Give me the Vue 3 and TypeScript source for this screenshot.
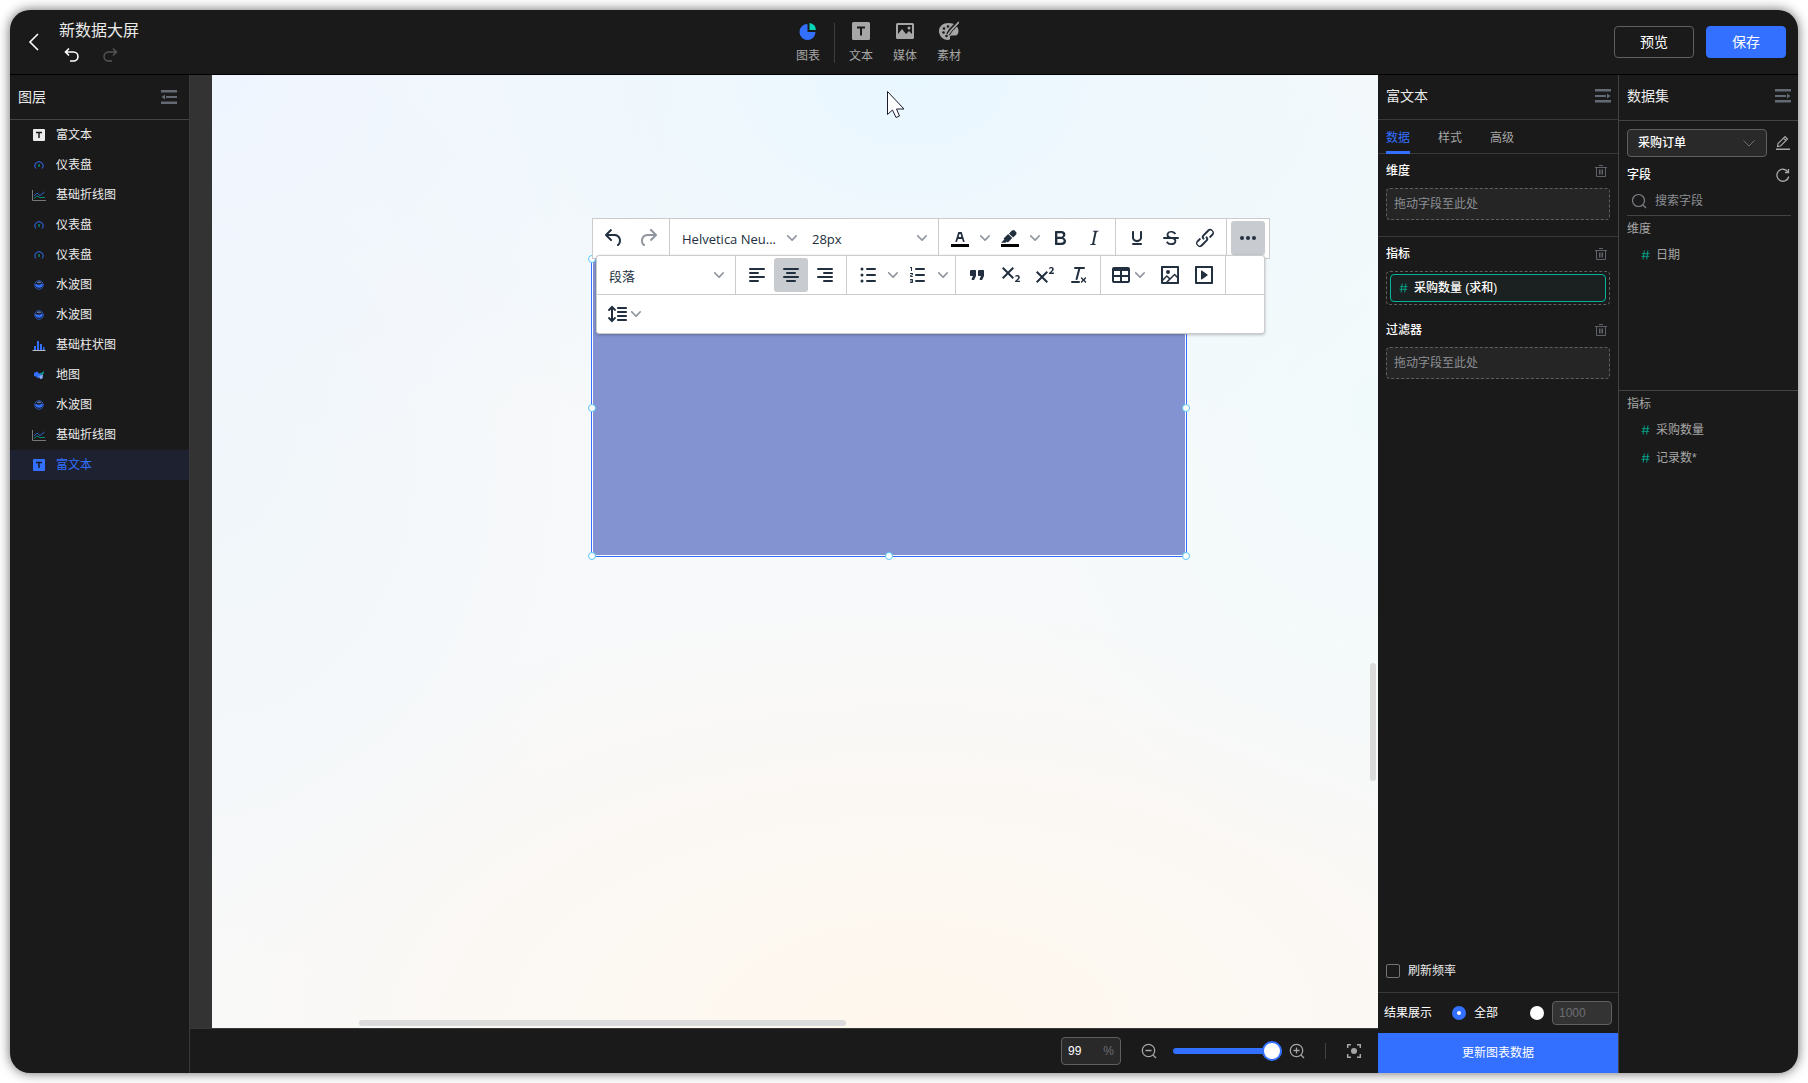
<script setup lang="ts">
import { ref } from 'vue'

type LayerKind = 'text' | 'gauge' | 'line' | 'liquid' | 'bar' | 'map'

interface Layer {
  kind: LayerKind
  name: string
}

interface ToolButton {
  id: string
  label: string
  paths: string[]
  split?: boolean
  menu?: boolean
  active?: boolean
  muted?: boolean
}

const layers: Layer[] = [
  { kind: 'text', name: '富文本' },
  { kind: 'gauge', name: '仪表盘' },
  { kind: 'line', name: '基础折线图' },
  { kind: 'gauge', name: '仪表盘' },
  { kind: 'gauge', name: '仪表盘' },
  { kind: 'liquid', name: '水波图' },
  { kind: 'liquid', name: '水波图' },
  { kind: 'bar', name: '基础柱状图' },
  { kind: 'map', name: '地图' },
  { kind: 'liquid', name: '水波图' },
  { kind: 'line', name: '基础折线图' },
  { kind: 'text', name: '富文本' },
]
const selectedLayer = ref(11)

const tabs = ['数据', '样式', '高级']
const activeTab = ref(0)

const chevron =
  'M8.7 2.2c.3-.3.8-.3 1 0 .4.4.4.9 0 1.2L5.7 7.8c-.3.3-.9.3-1.2 0L.2 3.4a.8.8 0 010-1.2c.3-.3.8-.3 1.1 0L5 6l3.7-3.8z'

const history: ToolButton[] = [
  {
    id: 'undo',
    label: '撤销',
    paths: [
      'M6.4 8H12c3.7 0 6.2 2 6.8 5.1.6 2.7-.4 5.6-2.3 6.8a1 1 0 01-1-1.8c1.1-.6 1.8-2.7 1.4-4.6-.5-2.1-2.1-3.5-4.9-3.5H6.4l3.3 3.3a1 1 0 11-1.4 1.4l-5-5a1 1 0 010-1.4l5-5a1 1 0 011.4 1.4L6.4 8z',
    ],
  },
  {
    id: 'redo',
    label: '重做',
    muted: true,
    paths: [
      'M17.6 10H12c-2.8 0-4.4 1.4-4.9 3.5-.4 2 .3 4 1.4 4.6a1 1 0 11-1 1.8c-2-1.2-2.9-4.1-2.3-6.8.6-3 3-5.1 6.8-5.1h5.6l-3.3-3.3a1 1 0 111.4-1.4l5 5a1 1 0 010 1.4l-5 5a1 1 0 01-1.4-1.4l3.3-3.3z',
    ],
  },
]

const colorTools: ToolButton[] = [
  {
    id: 'forecolor',
    label: '文字颜色',
    split: true,
    paths: [
      'M3 18h18v3H3z',
      'M8.7 16h-.8a.5.5 0 01-.5-.6l2.7-9c.1-.3.3-.4.5-.4h2.8c.2 0 .4.1.5.4l2.7 9a.5.5 0 01-.5.6h-.8a.5.5 0 01-.4-.4l-.7-2.2c0-.3-.3-.4-.5-.4h-3.4c-.2 0-.4.1-.5.4l-.7 2.2c0 .3-.2.4-.4.4zm2.6-7.6l-.6 2a.5.5 0 00.5.6h1.6a.5.5 0 00.5-.6l-.6-2c0-.3-.3-.4-.5-.4h-.4c-.2 0-.4.1-.5.4z',
    ],
  },
  {
    id: 'backcolor',
    label: '背景颜色',
    split: true,
    paths: [
      'M3 18h18v3H3z',
      'M7.7 16.7H3l3.3-3.3-.7-.8L10.2 8l4 4.1-4 4.2c-.2.2-.6.2-.8 0l-.6-.7-1.1 1.1zm5-7.5L11 7.4l3-2.9a2 2 0 012.6 0L18 6c.7.7.7 2 0 2.7l-2.9 2.9-1.8-1.8-.5-.6z',
    ],
  },
  {
    id: 'bold',
    label: '粗体',
    paths: [
      'M7.8 19c-.3 0-.5 0-.6-.2l-.2-.5V5.7c0-.2 0-.4.2-.5l.6-.2h5c1.5 0 2.7.3 3.5 1 .7.6 1.1 1.4 1.1 2.5a3 3 0 01-.6 1.9c-.4.6-1 1-1.6 1.2.4.1.9.3 1.3.6s.8.7 1 1.2c.4.4.5 1 .5 1.6 0 1.3-.4 2.3-1.3 3-.8.7-2.1 1-3.8 1H7.8zm5-8.3c.6 0 1.2-.1 1.6-.5.4-.3.6-.7.6-1.3 0-1.1-.8-1.7-2.3-1.7H9.3v3.5h3.4zm.5 6c.7 0 1.3-.1 1.7-.4.4-.4.6-.9.6-1.5s-.2-1-.7-1.4c-.4-.3-1-.4-2-.4H9.4v3.8h4z',
    ],
  },
  {
    id: 'italic',
    label: '斜体',
    paths: [
      'M16.7 4.7l-.1.9h-.3c-.6 0-1 0-1.4.3-.3.3-.4.6-.5 1.1l-2.1 9.8v.6c0 .5.4.8 1.4.8h.2l-.2.8H8l.2-.8h.2c1.1 0 1.8-.5 2-1.5l2-9.8.1-.5c0-.6-.4-.8-1.4-.8h-.3l.2-.9h5.8z',
    ],
  },
]

const decorTools: ToolButton[] = [
  {
    id: 'underline',
    label: '下划线',
    paths: [
      'M16 5c.6 0 1 .4 1 1v5.5a4 4 0 01-.4 1.8l-1 1.4a5.3 5.3 0 01-5.5 1 5 5 0 01-1.6-1c-.5-.4-.8-.9-1.1-1.4a4 4 0 01-.4-1.8V6c0-.6.4-1 1-1s1 .4 1 1v5.5c0 .3 0 .6.2 1l.6.7a3.3 3.3 0 002.2.8 3.4 3.4 0 002.2-.8c.3-.2.4-.5.6-.8l.2-.9V6c0-.6.4-1 1-1zM8 17h8c.6 0 1 .4 1 1s-.4 1-1 1H8a1 1 0 010-2z',
    ],
  },
  {
    id: 'strike',
    label: '删除线',
    paths: [
      'M15.6 8.5c-.5-.7-1-1.1-1.3-1.3-.6-.4-1.3-.6-2-.6-2.7 0-2.8 1.7-2.8 2.1 0 1.6 1.8 2 3.2 2.3 4.4.9 4.6 2.8 4.6 3.9 0 1.4-.7 4.1-5 4.1A6.2 6.2 0 017 16.4l1.5-1.1c.4.6 1.6 2 3.7 2 1.6 0 2.5-.4 3-1.2.4-.8.3-2-.8-2.6-.7-.4-1.6-.7-2.9-1-1-.2-3.9-.8-3.9-3.6C7.6 6 10.3 5 12.4 5c2.9 0 4.2 1.6 4.7 2.4l-1.5 1.1z',
      'M5 11h14a1 1 0 010 2H5a1 1 0 010-2z',
    ],
  },
  {
    id: 'link',
    label: '链接',
    paths: [
      'M6.2 12.3a1 1 0 011.4 1.4l-2.1 2a2 2 0 102.7 2.8l4.8-4.8a1 1 0 000-1.4 1 1 0 111.4-1.3 2.9 2.9 0 010 4L9.6 20a3.9 3.9 0 01-5.5-5.5l2-2zm11.6-.6a1 1 0 01-1.4-1.4l2-2a2 2 0 10-2.6-2.8L11 10.3a1 1 0 000 1.4A1 1 0 119.6 13a2.9 2.9 0 010-4L14.4 4a3.9 3.9 0 015.5 5.5l-2 2z',
    ],
  },
]

const moreTools: ToolButton[] = [
  {
    id: 'more',
    label: '更多',
    active: true,
    paths: [
      'M6 10a2 2 0 100 4 2 2 0 000-4zm12 0a2 2 0 100 4 2 2 0 000-4zm-6 0a2 2 0 100 4 2 2 0 000-4z',
    ],
  },
]

const alignTools: ToolButton[] = [
  {
    id: 'left',
    label: '左对齐',
    paths: [
      'M5 5h14a1 1 0 010 2H5a1 1 0 110-2zm0 4h8a1 1 0 010 2H5a1 1 0 110-2zm0 8h8a1 1 0 010 2H5a1 1 0 010-2zm0-4h14a1 1 0 010 2H5a1 1 0 010-2z',
    ],
  },
  {
    id: 'center',
    label: '居中',
    active: true,
    paths: [
      'M5 5h14a1 1 0 010 2H5a1 1 0 110-2zm3 4h8a1 1 0 010 2H8a1 1 0 110-2zm0 8h8a1 1 0 010 2H8a1 1 0 010-2zm-3-4h14a1 1 0 010 2H5a1 1 0 010-2z',
    ],
  },
  {
    id: 'right',
    label: '右对齐',
    paths: [
      'M5 5h14a1 1 0 010 2H5a1 1 0 110-2zm6 4h8a1 1 0 010 2h-8a1 1 0 010-2zm0 8h8a1 1 0 010 2h-8a1 1 0 010-2zm-6-4h14a1 1 0 010 2H5a1 1 0 010-2z',
    ],
  },
]

const listTools: ToolButton[] = [
  {
    id: 'bullets',
    label: '项目符号',
    split: true,
    paths: [
      'M11 5h8a1 1 0 010 2h-8a1 1 0 010-2zm0 6h8a1 1 0 010 2h-8a1 1 0 010-2zm0 6h8a1 1 0 010 2h-8a1 1 0 010-2z',
      'M6 4.5a1.5 1.5 0 110 3 1.5 1.5 0 010-3zm0 6a1.5 1.5 0 110 3 1.5 1.5 0 010-3zm0 6a1.5 1.5 0 110 3 1.5 1.5 0 010-3z',
    ],
  },
  {
    id: 'numbers',
    label: '编号列表',
    split: true,
    paths: [
      'M10 17h8a1 1 0 010 2h-8a1 1 0 010-2zm0-6h8a1 1 0 010 2h-8a1 1 0 010-2zm0-6h8a1 1 0 010 2h-8a1 1 0 110-2z',
      'M6 4v3.5c0 .3-.2.5-.5.5a.5.5 0 01-.5-.5V5h-.5a.5.5 0 010-1H6zm-1 8.8l.2.2h1.3c.3 0 .5.2.5.5s-.2.5-.5.5H4.9a1 1 0 01-.9-1V13c0-.4.3-.8.6-1l1.2-.4.2-.3a.2.2 0 00-.2-.2H4.5a.5.5 0 01-.5-.5c0-.3.2-.5.5-.5h1.6c.5 0 .9.4.9 1v.1c0 .4-.3.8-.6 1l-1.2.4-.2.3zM7 17v2c0 .6-.4 1-1 1H4.5a.5.5 0 010-1h1.2c.2 0 .3-.1.3-.3 0-.2-.1-.3-.3-.3H4.4a.4.4 0 110-.8h1.3c.2 0 .3-.1.3-.3 0-.2-.1-.3-.3-.3H4.5a.5.5 0 110-1H6c.6 0 1 .4 1 1z',
    ],
  },
]

const formatTools: ToolButton[] = [
  {
    id: 'quote',
    label: '引用',
    paths: [
      'M7.5 17h.9c.4 0 .7-.2.9-.6L11 13V8c0-.6-.4-1-1-1H6a1 1 0 00-1 1v4c0 .6.4 1 1 1h2l-1.3 2.7a1 1 0 00.8 1.3zm8 0h.9c.4 0 .7-.2.9-.6L19 13V8c0-.6-.4-1-1-1h-4a1 1 0 00-1 1v4c0 .6.4 1 1 1h2l-1.3 2.7a1 1 0 00.8 1.3z',
    ],
  },
  {
    id: 'sub',
    label: '下标',
    paths: [
      'M10.4 10l4.6 4.6-1.4 1.4L9 11.4 4.4 16 3 14.6 7.6 10 3 5.4 4.4 4 9 8.6 13.6 4 15 5.4 10.4 10zM21 19h-5v-1l1-.8 1.7-1.6c.3-.4.5-.8.5-1.2 0-.3 0-.6-.2-.7-.2-.2-.5-.3-.9-.3a2 2 0 00-.8.2l-.7.3-.4-1.1 1-.6 1.2-.2c.8 0 1.4.3 1.8.7.4.4.6.9.6 1.5s-.2 1.1-.5 1.6a8 8 0 01-1.3 1.3l-.6.6h2.6V19z',
    ],
  },
  {
    id: 'sup',
    label: '上标',
    paths: [
      'M15 9.4L10.4 14l4.6 4.6-1.4 1.4L9 15.4 4.4 20 3 18.6 7.6 14 3 9.4 4.4 8 9 12.6 13.6 8 15 9.4zm5.9 1.6h-5v-1l1-.8 1.7-1.6c.3-.5.5-.9.5-1.3 0-.3 0-.5-.2-.7-.2-.2-.5-.3-.9-.3l-.8.2-.7.4-.4-1.2c.2-.2.5-.4 1-.5.3-.2.8-.2 1.2-.2.8 0 1.4.2 1.8.6.4.4.6 1 .6 1.6 0 .5-.2 1-.5 1.5l-1.3 1.4-.6.5h2.6V11z',
    ],
  },
  {
    id: 'clear',
    label: '清除格式',
    paths: [
      'M13.2 6a1 1 0 010 .2l-2.6 10a1 1 0 01-1 .8h-.2a.8.8 0 01-.8-1l2.6-10H8a1 1 0 110-2h9a1 1 0 010 2h-3.8zM5 18h7a1 1 0 010 2H5a1 1 0 010-2zm13 1.5L16.5 18 15 19.5a.7.7 0 01-1-1l1.5-1.5-1.5-1.5a.7.7 0 011-1l1.5 1.5 1.5-1.5a.7.7 0 011 1L17.5 17l1.5 1.5a.7.7 0 01-1 1z',
    ],
  },
]

const insertTools: ToolButton[] = [
  {
    id: 'table',
    label: '表格',
    menu: true,
    paths: [
      'M19 4a2 2 0 012 2v12a2 2 0 01-2 2H5a2 2 0 01-2-2V6c0-1.1.9-2 2-2h14zM5 14v4h6v-4H5zm14 0h-6v4h6v-4zm0-6h-6v4h6V8zM5 12h6V8H5v4z',
    ],
  },
  {
    id: 'image',
    label: '图片',
    paths: [
      'M5 15.7l3.3-3.2c.3-.3.7-.3 1 0L12 15l4.1-4c.3-.4.8-.4 1 0l2 1.9V5H5v10.7zM5 18V19h3l2.8-2.9-2-2L5 17.9zm14-3l-2.5-2.4-6.4 6.5H19v-4zM4 3h16c.6 0 1 .4 1 1v16c0 .6-.4 1-1 1H4a1 1 0 01-1-1V4c0-.6.4-1 1-1zm6 8a2 2 0 100-4 2 2 0 000 4z',
    ],
  },
  {
    id: 'media',
    label: '媒体',
    paths: [
      'M4 3h16c.6 0 1 .4 1 1v16c0 .6-.4 1-1 1H4a1 1 0 01-1-1V4c0-.6.4-1 1-1zm1 2v14h14V5H5zm4.8 2.6l5.6 4a.5.5 0 010 .8l-5.6 4A.5.5 0 019 16V8a.5.5 0 01.8-.4z',
    ],
  },
]

const spacingTools: ToolButton[] = [
  {
    id: 'lineheight',
    label: '行高',
    menu: true,
    paths: [
      'M21 5a1 1 0 01.1 2H13a1 1 0 01-.1-2H21zm0 4a1 1 0 01.1 2H13a1 1 0 01-.1-2H21zm0 4a1 1 0 01.1 2H13a1 1 0 01-.1-2H21zm0 4a1 1 0 01.1 2H13a1 1 0 01-.1-2H21z',
      'M7 3.6l3.7 3.7a1 1 0 01-1.3 1.5h-.1L8 7.3v9.2l1.3-1.3a1 1 0 011.3 0h.1c.4.4.4 1 0 1.3v.1L7 20.4l-3.7-3.7a1 1 0 011.3-1.5h.1L6 16.7V7.4L4.7 8.7a1 1 0 01-1.3 0h-.1a1 1 0 010-1.3v-.1L7 3.6z',
    ],
  },
]

type Group = { kind: 'tools'; items: ToolButton[] } | { kind: 'picks'; items: string[] } | { kind: 'empty' }

const mainBar: Group[] = [
  { kind: 'tools', items: history },
  { kind: 'picks', items: ['Helvetica Neu...', '28px'] },
  { kind: 'tools', items: colorTools },
  { kind: 'tools', items: decorTools },
  { kind: 'tools', items: moreTools },
]
const overflowRows: Group[][] = [
  [
    { kind: 'picks', items: ['段落'] },
    { kind: 'tools', items: alignTools },
    { kind: 'tools', items: listTools },
    { kind: 'tools', items: formatTools },
    { kind: 'tools', items: insertTools },
    { kind: 'empty' },
  ],
  [{ kind: 'tools', items: spacingTools }],
]

const bars = [
  { rows: [mainBar], name: 'main-bar' },
  { rows: overflowRows, name: 'overflow-bar' },
]
const handles = ['nw', 'w', 'e', 'sw', 's', 'se']

const zoom = ref('99')
const zoomLevel = ref(100)
const refreshRate = ref(false)
const resultMode = ref('all')
const keyword = ref('')
const measures = ['采购数量', '记录数*']
</script>

<template>
  <div class="frame">
    <div class="app">
      <header class="topbar">
        <div class="top-left">
          <button class="icon-btn" aria-label="返回">
            <svg width="20" height="20" viewBox="0 0 20 20" fill="none" stroke="#fff" stroke-width="1.6"><path d="M14 2L6 10l8 8" /></svg>
          </button>
          <div class="title-box">
            <h1>新数据大屏</h1>
            <div class="history">
              <button class="icon-btn" aria-label="撤销">
                <svg width="16" height="16" viewBox="0 0 16 16" fill="none" stroke="#fff" stroke-width="1.6"><path d="M5 1.5L1.5 5 5 8.5M2 5h7.5a4.5 4.5 0 010 9H6" /></svg>
              </button>
              <button class="icon-btn" aria-label="重做">
                <svg width="16" height="16" viewBox="0 0 16 16" fill="none" stroke="#565656" stroke-width="1.4"><path d="M11 1.5L14.5 5 11 8.5M14 5H6.5a4.5 4.5 0 000 9H10" /></svg>
              </button>
            </div>
          </div>
        </div>

        <nav class="inserts">
          <button class="insert">
            <svg width="20" height="20" viewBox="0 0 20 20"><path d="M9.500 3a8 8 0 108 8h-8z" fill="#3370ff" /><path d="M11.500 2a7 7 0 016.500 7h-6.500z" fill="#04d7b6" /></svg>
            <span>图表</span>
          </button>
          <i class="insert-line"></i>
          <button class="insert">
            <svg width="20" height="20" viewBox="0 0 20 20"><rect x="1" y="1" width="18" height="18" rx="1.500" fill="#a6a6a6" /><path d="M6 6.500h8M10 6.500v8" stroke="#1a1a1a" stroke-width="2" /></svg>
            <span>文本</span>
          </button>
          <button class="insert">
            <svg width="20" height="20" viewBox="0 0 20 20"><rect x="1" y="2" width="18" height="16" rx="1.500" fill="#a6a6a6" /><path d="M3 4h14v9l-3-3-3 3-4-5-4 5z" fill="#1a1a1a" /><circle cx="14" cy="7" r="1.500" fill="#a6a6a6" /></svg>
            <span>媒体</span>
          </button>
          <button class="insert">
            <svg width="20" height="20" viewBox="0 0 20 20">
              <path d="M9.500 2C4 2 0 5.500 0 10s3.500 9 9 9c1.600 0 2.200-1 2-2.300-.2-1.500.3-2.200 2-2.200h3c2.500 0 3.500-2 3.500-4.500C19.500 5 15.500 2 9.500 2z" fill="#a6a6a6" />
              <g fill="#1a1a1a"><circle cx="4.500" cy="11.500" r="1.300" /><circle cx="5" cy="7.500" r="1.300" /><circle cx="9" cy="5.500" r="1.300" /><circle cx="7.500" cy="15" r="1.300" /></g>
              <path d="M20 .5L11.500 9.500 9 13.500" fill="none" stroke="#1a1a1a" stroke-width="4" />
              <path d="M19.500 1.500L12 9.500l-2.500 3.500" fill="none" stroke="#a6a6a6" stroke-width="1.800" stroke-linecap="round" />
            </svg>
            <span>素材</span>
          </button>
        </nav>

        <div class="actions">
          <button class="btn">预览</button>
          <button class="btn primary">保存</button>
        </div>
      </header>

      <div class="body">
        <aside class="layers">
          <div class="panel-head">
            <h2>图层</h2>
            <button class="icon-btn" aria-label="收起图层">
              <svg width="16" height="14" viewBox="0 0 16 14" fill="#646a73"><path d="M0 0h16v2.500H0zM5 6h11v2H5zM0 11.500h16V14H0zM.5 7l3.500-2.500v5z" /></svg>
            </button>
          </div>
          <ul>
            <li v-for="(layer, i) in layers" :key="i">
              <button class="layer" :class="{ selected: i === selectedLayer }" @click="selectedLayer = i">
                <svg width="14" height="14" viewBox="0 0 14 14">
                  <template v-if="layer.kind === 'text'">
                    <rect x="1" y="1" width="12" height="12" rx="1" :fill="i === selectedLayer ? '#3370ff' : '#ebebeb'" />
                    <path d="M4 4.500h6M7 4.500V10" stroke="#1a1a1a" stroke-width="1.500" />
                  </template>
                  <template v-else-if="layer.kind === 'gauge'">
                    <path d="M4 10.500a4 4 0 116 0" fill="none" stroke="#2f5fd0" stroke-width="1.100" />
                    <path d="M7 6v3" stroke="#04866f" stroke-width="1.500" />
                  </template>
                  <template v-else-if="layer.kind === 'line'">
                    <path d="M.5 2v10.500H14" fill="none" stroke="#77797c" />
                    <path d="M2 8l3-3 3 2.500L12.500 4" fill="none" stroke="#3370ff" stroke-opacity=".8" />
                    <path d="M2 10.500l3-2.500 3 1.500h5" fill="none" stroke="#04a68d" stroke-opacity=".8" />
                  </template>
                  <template v-else-if="layer.kind === 'liquid'">
                    <circle cx="7" cy="7" r="4.300" fill="none" stroke="#2c56b8" />
                    <path d="M3.200 6c1.500-.5 2.500 1 4 .8S9.700 5.500 10.800 6a3.800 3.800 0 11-7.600 0z" fill="#3370ff" />
                    <path d="M4.500 4.500a4 4 0 015 0c-1.500.8-3 1-5 0z" fill="#9db8ff" fill-opacity=".6" />
                  </template>
                  <template v-else-if="layer.kind === 'bar'">
                    <path d="M2 8h2v4H2zM5 3h2v9H5zM8 6h2v6H8zM11 9h1.500v3H11z" fill="#3370ff" />
                    <path d="M.5 12.500h13" stroke="#b8bbc0" />
                  </template>
                  <template v-else>
                    <path d="M2 5l3-1.500 2 2L9.500 5l-1 3.500L6 10.500 4 8.500 2 8z" fill="#3370ff" />
                    <path d="M8 6l4-3-.5 3-2 1z" fill="#04a68d" />
                    <path d="M7 8l4-1.500-.5 4-2.500.5z" fill="#8cacff" />
                  </template>
                </svg>
                <span>{{ layer.name }}</span>
              </button>
            </li>
          </ul>
        </aside>

        <main class="workspace">
          <div class="stage">
            <div class="canvas">
              <div class="selection">
                <i v-for="h in handles" :key="h" class="handle" :class="h"></i>
              </div>

              <div v-for="bar in bars" :key="bar.name" class="editor-bar" :class="bar.name" role="toolbar">
                <div v-for="(row, r) in bar.rows" :key="r" class="editor-row">
                  <div v-for="(group, g) in row" :key="g" class="group">
                    <template v-if="group.kind === 'tools'">
                      <template v-for="tool in group.items" :key="tool.id">
                        <button class="tool" :class="{ active: tool.active, muted: tool.muted, menu: tool.menu }" :aria-label="tool.label">
                          <svg width="24" height="24" viewBox="0 0 24 24" fill-rule="evenodd">
                            <path v-for="(d, p) in tool.paths" :key="p" :d="d" :fill="tool.split && d.startsWith('M3 18') ? '#000' : undefined" />
                          </svg>
                          <svg v-if="tool.menu" class="chev" width="10" height="10" viewBox="0 0 10 10"><path :d="chevron" /></svg>
                        </button>
                        <button v-if="tool.split" class="tool-arrow" :aria-label="tool.label + '选项'">
                          <svg class="chev" width="10" height="10" viewBox="0 0 10 10"><path :d="chevron" /></svg>
                        </button>
                      </template>
                    </template>
                    <template v-else-if="group.kind === 'picks'">
                      <span v-for="pick in group.items" :key="pick" class="pick">
                        <select :aria-label="pick"><option>{{ pick }}</option></select>
                        <svg class="chev" width="10" height="10" viewBox="0 0 10 10"><path :d="chevron" /></svg>
                      </span>
                    </template>
                  </div>
                </div>
              </div>

              <svg class="cursor" width="20" height="30" viewBox="0 0 20 30"><path d="M1.500 1.500v23l5-4.500 3.500 7.500 3.500-1.500-3-7h7.500z" fill="#fff" stroke="#1c1c2b" /></svg>
            </div>
            <i class="scroll-y"></i>
            <i class="scroll-x"></i>
          </div>

          <footer class="statusbar">
            <label class="zoom-box">
              <input v-model="zoom" type="text" aria-label="缩放比例" />
              <span>%</span>
            </label>
            <button class="icon-btn" aria-label="缩小">
              <svg width="16" height="16" viewBox="0 0 16 16" fill="none" stroke="#a6a6a6" stroke-width="1.300"><circle cx="7.500" cy="7.500" r="6.200" /><path d="M4.500 7.500h6M12 12l3 3" /></svg>
            </button>
            <input v-model="zoomLevel" class="slider" type="range" min="10" max="100" aria-label="缩放" />
            <button class="icon-btn" aria-label="放大">
              <svg width="16" height="16" viewBox="0 0 16 16" fill="none" stroke="#a6a6a6" stroke-width="1.300"><circle cx="7.500" cy="7.500" r="6.200" /><path d="M4.500 7.500h6M7.500 4.500v6M12 12l3 3" /></svg>
            </button>
            <i class="status-line"></i>
            <button class="icon-btn" aria-label="适应画布">
              <svg width="16" height="16" viewBox="0 0 16 16" fill="none" stroke="#a6a6a6" stroke-width="1.500"><path d="M1.700 5V1.700H5M11 1.700h3.300V5M14.300 11v3.300H11M5 14.300H1.700V11" /><circle cx="8" cy="8" r="3" fill="#a6a6a6" stroke="none" /></svg>
            </button>
          </footer>
        </main>

        <aside class="settings">
          <div class="panel-head side-head">
            <h2>富文本</h2>
            <button class="icon-btn" aria-label="收起设置">
              <svg width="16" height="14" viewBox="0 0 16 14" fill="#646a73"><path d="M0 0h16v2.500H0zM0 6h11v2H0zM0 11h16v2.500H0zM15.500 7L12 4.500v5z" /></svg>
            </button>
          </div>
          <div class="tabs" role="tablist">
            <button v-for="(tab, i) in tabs" :key="tab" role="tab" class="tab" :class="{ on: i === activeTab }" @click="activeTab = i">{{ tab }}</button>
          </div>
          <section class="slot divided">
            <div class="slot-head">
              <h3>维度</h3>
              <button class="icon-btn" aria-label="清空维度"><svg width="12" height="12" viewBox="0 0 12 12" fill="none" stroke="#5f6369"><path d="M0 2.500h12M4 .5h4M1.500 2.500v9h9v-9M4.500 4.500v5M6 4.500v5M7.500 4.500v5" /></svg></button>
            </div>
            <div class="drop">拖动字段至此处</div>
          </section>
          <section class="slot">
            <div class="slot-head">
              <h3>指标</h3>
              <button class="icon-btn" aria-label="清空指标"><svg width="12" height="12" viewBox="0 0 12 12" fill="none" stroke="#5f6369"><path d="M0 2.500h12M4 .5h4M1.500 2.500v9h9v-9M4.500 4.500v5M6 4.500v5M7.500 4.500v5" /></svg></button>
            </div>
            <div class="drop filled">
              <button class="chip">
                <svg width="9" height="10" viewBox="0 0 10 10" fill="none" stroke="#04a68d"><path d="M3.700 0L2.300 10M7.700 0L6.300 10M1 3.500h8.500M.5 6.500H9" /></svg>
                <span>采购数量 (求和)</span>
              </button>
            </div>
          </section>
          <section class="slot">
            <div class="slot-head">
              <h3>过滤器</h3>
              <button class="icon-btn" aria-label="清空过滤器"><svg width="12" height="12" viewBox="0 0 12 12" fill="none" stroke="#5f6369"><path d="M0 2.500h12M4 .5h4M1.500 2.500v9h9v-9M4.500 4.500v5M6 4.500v5M7.500 4.500v5" /></svg></button>
            </div>
            <div class="drop">拖动字段至此处</div>
          </section>

          <div class="settings-foot">
            <label class="refresh"><input v-model="refreshRate" type="checkbox" /><span>刷新频率</span></label>
            <div class="results">
              <span>结果展示</span>
              <label class="all"><input v-model="resultMode" type="radio" value="all" name="result" /><span>全部</span></label>
              <label class="limit"><input v-model="resultMode" type="radio" value="limit" name="result" aria-label="限制条数" /></label>
              <input class="count" type="text" value="1000" disabled aria-label="条数" />
            </div>
            <button class="update">更新图表数据</button>
          </div>
        </aside>

        <aside class="dataset">
          <div class="panel-head side-head">
            <h2>数据集</h2>
            <button class="icon-btn" aria-label="收起数据集">
              <svg width="16" height="14" viewBox="0 0 16 14" fill="#646a73"><path d="M0 0h16v2.500H0zM0 6h11v2H0zM0 11h16v2.500H0zM15.500 7L12 4.500v5z" /></svg>
            </button>
          </div>
          <div class="source">
            <span class="source-pick">
              <select aria-label="数据集"><option>采购订单</option></select>
              <svg width="12" height="7" viewBox="0 0 12 7" fill="none" stroke="#6b6e73"><path d="M.5.500L6 6 11.500.5" /></svg>
            </span>
            <button class="icon-btn" aria-label="编辑数据集">
              <svg width="14" height="16" viewBox="0 0 14 16" fill="none" stroke="#a6a6a6" stroke-width="1.200"><path d="M1.500 11.500l.5-3 7-7 2.500 2.500-7 7zM7.500 3l2.500 2.500" /><path d="M0 14.300h14" stroke-width="1.500" /></svg>
            </button>
          </div>
          <div class="fields-head">
            <h3>字段</h3>
            <button class="icon-btn" aria-label="刷新字段">
              <svg width="14" height="14" viewBox="0 0 14 14" fill="none" stroke="#a6a6a6" stroke-width="1.300"><path d="M12 4A6 6 0 1012.800 8.500M12.500 1v3.500H9" /></svg>
            </button>
          </div>
          <label class="search">
            <svg width="16" height="16" viewBox="0 0 16 16" fill="none" stroke="#7c7f84" stroke-width="1.200"><circle cx="7.500" cy="7.500" r="6" /><path d="M12 12l3 3" /></svg>
            <input v-model="keyword" type="text" placeholder="搜索字段" />
          </label>
          <section class="fields dims">
            <h4>维度</h4>
            <button class="field">
              <svg width="9" height="10" viewBox="0 0 10 10" fill="none" stroke="#04a68d"><path d="M3.700 0L2.300 10M7.700 0L6.300 10M1 3.500h8.500M.5 6.500H9" /></svg>
              <span>日期</span>
            </button>
          </section>
          <section class="fields">
            <h4>指标</h4>
            <button v-for="m in measures" :key="m" class="field">
              <svg width="9" height="10" viewBox="0 0 10 10" fill="none" stroke="#04a68d"><path d="M3.700 0L2.300 10M7.700 0L6.300 10M1 3.500h8.500M.5 6.500H9" /></svg>
              <span>{{ m }}</span>
            </button>
          </section>
        </aside>
      </div>
    </div>
  </div>
</template>

<style>
body {
  background: #fff;
}
</style>

<style scoped>
* {
  box-sizing: border-box;
}

.frame {
  height: 100vh;
  padding: 10px;
  font-family: 'Liberation Sans', 'Noto Sans CJK SC', sans-serif;
  font-size: 12px;
  line-height: 20px;
  color: #ebebeb;
}

.app {
  display: flex;
  flex-direction: column;
  height: 100%;
  overflow: hidden;
  background: #1a1a1a;
  border-radius: 20px;
  box-shadow: 0 0 12px rgba(0, 0, 0, 0.6);
}

h1,
h2,
h3,
h4,
ul {
  margin: 0;
  padding: 0;
  font-weight: 400;
  list-style: none;
}

h1 {
  font-size: 16px;
  line-height: 24px;
}

h2 {
  font-size: 14px;
}

h3,
h4 {
  font-size: 12px;
}

h3 {
  font-weight: 500;
  color: #fff;
}

h4 {
  padding-top: 1px;
  color: #a6a6a6;
  line-height: 24px;
}

button,
input,
select {
  margin: 0;
  font: inherit;
  color: inherit;
}

button {
  padding: 0;
  border: 0;
  background: none;
}

svg {
  display: block;
  flex: none;
}

.icon-btn {
  display: flex;
}

/* top bar */
.topbar {
  display: flex;
  flex: none;
  align-items: center;
  justify-content: space-between;
  height: 65px;
  padding: 0 12px 0 14px;
  border-bottom: 1px solid #000;
}

.top-left,
.actions {
  display: flex;
  align-items: center;
}

.top-left {
  gap: 15px;
  padding-right: 4px;
}

.title-box {
  padding-bottom: 2px;
}

.history {
  display: flex;
  gap: 22px;
  padding: 4px 0 0 5px;
}

.inserts {
  display: flex;
  align-items: center;
  padding-top: 2px;
}

.insert {
  display: flex;
  flex-direction: column;
  align-items: center;
  gap: 5px;
  width: 44px;
  color: #a6a6a6;
}

.insert-line {
  width: 1px;
  height: 40px;
  margin: 0 4px;
  background: #3d3d3d;
}

.actions {
  gap: 12px;
}

.btn {
  width: 80px;
  height: 32px;
  font-size: 14px;
  color: #fff;
  border: 1px solid #5f5f5f;
  border-radius: 4px;
}

.btn.primary {
  background: #3370ff;
  border-color: #3370ff;
}

.body {
  display: flex;
  flex: 1;
  min-height: 0;
}

.panel-head {
  display: flex;
  flex: none;
  align-items: center;
  justify-content: space-between;
  height: 45px;
  padding: 0 7px 0 8px;
  border-bottom: 1px solid #434343;
}

.side-head {
  padding-bottom: 3px;
}

/* layers */
.layers {
  flex: none;
  width: 180px;
  border-right: 1px solid #393939;
}

.layers .panel-head {
  padding-right: 12px;
}

.layer {
  display: flex;
  align-items: center;
  gap: 10px;
  width: 100%;
  height: 30px;
  padding-left: 22px;
}

.layer.selected {
  color: #3370ff;
  background: #1d2130;
}

/* workspace */
.workspace {
  display: flex;
  flex: 1;
  flex-direction: column;
  min-width: 0;
}

.stage {
  position: relative;
  display: flex;
  flex: 1;
  padding-left: 22px;
  background: #333;
}

.canvas {
  position: relative;
  flex: 1;
  overflow: hidden;
  background:
    radial-gradient(50% 45% at 60% 0%, #e9f7ff, transparent),
    radial-gradient(45% 45% at 0% 0%, #eff5ff, transparent),
    radial-gradient(35% 55% at 0% 40%, #f0f6fa, transparent),
    radial-gradient(35% 50% at 100% 35%, #f1fafb, transparent),
    radial-gradient(70% 45% at 60% 100%, #fff7ed, transparent),
    #f8f9fa;
}

.selection {
  position: absolute;
  top: 183px;
  left: 379px;
  width: 596px;
  height: 299px;
  padding: 1px;
  background: #8392d0 content-box;
  border: 1px solid #3370ff;
  box-shadow: inset 0 0 0 1px #fff;
}

.handle {
  position: absolute;
  width: 8px;
  height: 8px;
  background: #fff;
  border: 1px solid #59c7f9;
  border-radius: 50%;
  transform: translate(-50%, -50%);
}

.nw,
.w,
.sw {
  left: 0;
}

.e,
.se {
  left: 100%;
}

.s {
  left: 50%;
}

.nw {
  top: 0;
}

.w,
.e {
  top: 50%;
}

.s,
.sw,
.se {
  top: 100%;
}

/* rich-text toolbar */
.editor-bar {
  position: absolute;
  background: #fff;
  border: 1px solid #ccc;
  color: #222f3e;
}

.main-bar {
  top: 143px;
  left: 380px;
}

.overflow-bar {
  top: 180px;
  left: 384px;
  width: 669px;
  border-radius: 3px;
  box-shadow: 0 1px 3px rgba(0, 0, 0, 0.25);
}

.editor-row {
  display: flex;
  height: 38px;
}

.main-bar .editor-row {
  height: 39px;
}

.editor-row + .editor-row {
  border-top: 1px solid #ccc;
  height: 39px;
}

.group {
  display: flex;
  padding: 2px 4px;
}

.group + .group {
  border-left: 1px solid #ccc;
}

.tool,
.tool-arrow {
  display: flex;
  align-items: center;
  justify-content: center;
  width: 34px;
  height: 34px;
  fill: #222f3e;
  border-radius: 3px;
}

.tool-arrow {
  width: 16px;
}

.tool.menu {
  justify-content: flex-start;
  gap: 2px;
  width: 48px;
  padding-left: 4px;
}

.tool.active {
  background: #c8cbcf;
}

.tool.muted {
  opacity: 0.5;
}

.chev {
  fill: #8f969e;
}

.pick {
  position: relative;
  display: flex;
  align-items: center;
  width: 130px;
  height: 34px;
}

.pick select {
  width: 100%;
  height: 100%;
  padding: 1px 20px 0 8px;
  font-family: 'Open Sans', 'Noto Sans CJK SC', sans-serif;
  font-size: 13px;
  background: none;
  border: 0;
  appearance: none;
}

.pick .chev {
  position: absolute;
  right: 7px;
  pointer-events: none;
}

.cursor {
  position: absolute;
  top: 15px;
  left: 674px;
}

.scroll-x,
.scroll-y {
  position: absolute;
  background: #dbdbdb;
  border-radius: 3px;
}

.scroll-x {
  bottom: 2px;
  left: 169px;
  width: 487px;
  height: 6px;
}

.scroll-y {
  top: 588px;
  right: 2px;
  width: 6px;
  height: 118px;
}

/* status bar */
.statusbar {
  display: flex;
  flex: none;
  align-items: center;
  justify-content: flex-end;
  height: 45px;
  padding-right: 16px;
  border-top: 1px solid #393939;
}

.zoom-box {
  display: flex;
  align-items: center;
  width: 60px;
  height: 28px;
  margin-right: 20px;
  padding: 0 6px;
  background: #292929;
  border: 1px solid #5f5f5f;
  border-radius: 4px;
  color: #6b6e73;
}

.zoom-box input {
  flex: 1;
  width: 20px;
  padding: 0;
  color: #fff;
  background: none;
  border: 0;
}

.slider {
  width: 109px;
  height: 20px;
  margin: 0 7px 0 16px;
  background: none;
  appearance: none;
}

.slider::-webkit-slider-runnable-track {
  height: 6px;
  background: #3370ff;
  border-radius: 3px;
}

.slider::-webkit-slider-thumb {
  width: 20px;
  height: 20px;
  margin-top: -7px;
  background: #fff;
  border: 2px solid #3370ff;
  border-radius: 50%;
  appearance: none;
}

.status-line {
  width: 1px;
  height: 16px;
  margin: 0 20px;
  background: #434343;
}

/* settings */
.settings {
  display: flex;
  flex: none;
  flex-direction: column;
  width: 241px;
  border-right: 1px solid #434343;
}

.settings .panel-head,
.tabs,
.divided {
  border-bottom: 1px solid #393939;
}

.tabs {
  display: flex;
  gap: 28px;
  height: 34px;
  padding: 0 8px;
  color: #a6a6a6;
}

.tab {
  height: 34px;
  padding-top: 4px;
  border-bottom: 3px solid transparent;
}

.tab.on {
  color: #3370ff;
  border-color: #3370ff;
}

.slot {
  padding: 0 8px 8px;
}

.divided {
  padding-bottom: 16px;
}

.slot-head {
  display: flex;
  align-items: center;
  justify-content: space-between;
  height: 34px;
  padding-right: 3px;
}

.drop {
  height: 32px;
  padding: 5px 7px;
  color: #8c8f94;
  background: #252525;
  border: 1px dashed #5f5f5f;
  border-radius: 4px;
}

.drop.filled {
  height: 34px;
  padding: 2px 3px;
  background: none;
}

.chip {
  display: flex;
  align-items: center;
  gap: 6px;
  width: 100%;
  height: 28px;
  padding-left: 8px;
  font-weight: 500;
  color: #fff;
  background: #1b2120;
  border: 1px solid #04b49c;
  border-radius: 4px;
}

.settings-foot {
  margin-top: auto;
}

.refresh {
  display: flex;
  align-items: center;
  gap: 8px;
  height: 43px;
  padding-left: 8px;
  border-bottom: 1px solid #393939;
}

.refresh input {
  width: 14px;
  height: 14px;
  border: 1px solid #757575;
  border-radius: 2px;
  appearance: none;
}

.results {
  display: flex;
  align-items: center;
  height: 40px;
  padding: 0 6px;
  color: #fff;
}

.all,
.limit {
  display: flex;
  align-items: center;
  gap: 8px;
}

.all {
  margin-left: 20px;
}

.limit {
  margin: 0 8px 0 auto;
}

.results input[type='radio'] {
  width: 14px;
  height: 14px;
  background: #fff;
  border-radius: 50%;
  appearance: none;
}

.results input[type='radio']:checked {
  border: 5px solid #3370ff;
}

.count {
  width: 60px;
  height: 24px;
  padding: 0 6px;
  color: #6b6e73;
  background: #333;
  border: 1px solid #5f5f5f;
  border-radius: 4px;
}

.update {
  display: block;
  width: 100%;
  height: 40px;
  color: #fff;
  background: #3370ff;
}

/* dataset */
.dataset {
  flex: none;
  width: 179px;
}

.dataset .panel-head {
  height: 46px;
}

.source,
.fields-head {
  display: flex;
  align-items: center;
  justify-content: space-between;
}

.source {
  padding: 8px 8px 4px;
}

.source-pick {
  position: relative;
  display: flex;
  align-items: center;
}

.source-pick select {
  width: 140px;
  height: 28px;
  padding: 0 24px 0 10px;
  font-weight: 500;
  color: #fff;
  background: #292929;
  border: 1px solid #5f5f5f;
  border-radius: 4px;
  appearance: none;
}

.source-pick svg {
  position: absolute;
  right: 12px;
  pointer-events: none;
}

.fields-head {
  height: 28px;
  padding: 0 8px;
}

.search {
  display: flex;
  align-items: center;
  gap: 8px;
  height: 27px;
  margin: 0 7px 0 8px;
  padding: 0 0 2px 4px;
  border-bottom: 1px solid #434343;
}

.search input {
  flex: 1;
  width: 60px;
  padding: 0;
  background: none;
  border: 0;
}

.search input::placeholder {
  color: #8c8f94;
}

.fields h4 {
  padding-left: 8px;
}

.dims {
  min-height: 175px;
  border-bottom: 1px solid #434343;
}

.field {
  display: flex;
  align-items: center;
  gap: 6px;
  width: 100%;
  height: 28px;
  padding-left: 22px;
  color: #a6a6a6;
}
</style>
